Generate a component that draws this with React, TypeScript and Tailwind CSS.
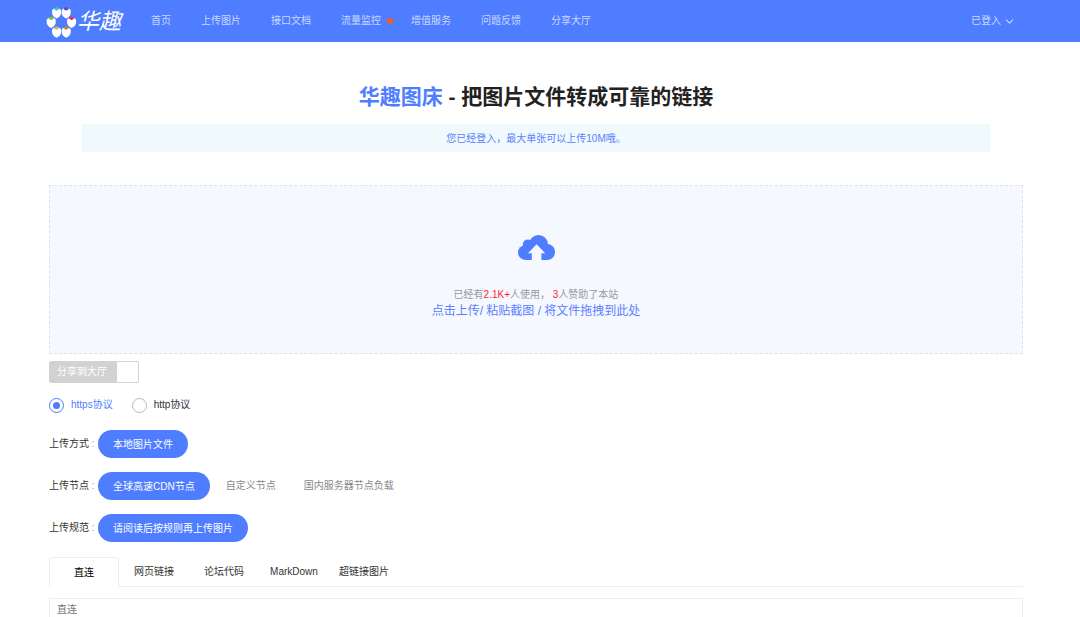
import { useState } from 'react';
import { ChevronDown } from 'lucide-react';

const NAV = [
  { label: '首页' },
  { label: '上传图片' },
  { label: '接口文档' },
  { label: '流量监控', dot: true },
  { label: '增值服务' },
  { label: '问题反馈' },
  { label: '分享大厅' },
];

const PETALS = [
  { x: 10.6, y: 7, cap: '#3fc9a8' },
  { x: 20.2, y: 7, cap: '#6a3fc8' },
  { x: 5.2, y: 16.5, cap: '#7ac832' },
  { x: 25.6, y: 16.5, cap: '#e0304a' },
  { x: 10.6, y: 26.2, cap: '#d8bc3a' },
  { x: 20.2, y: 26.2, cap: '#e07a2a' },
];

const TABS = ['直连', '网页链接', '论坛代码', 'MarkDown', '超链接图片'];

function Logo() {
  return (
    <a href="#" className="flex w-[105px] shrink-0 items-center pt-[2px] text-white">
      <svg viewBox="0 0 31 32" className="h-8 w-[31px]" aria-hidden="true">
        {PETALS.map(({ x, y, cap }) => (
          <g key={cap} transform={`translate(${x} ${y})`}>
            <path d="M-4.6 -1.5C-4.6 -4 -2.5 -4.8 0 -4.6C2.5 -4.8 4.6 -4 4.6 -1.5C4.8 2 3.2 4 0 5.5C-3.2 4 -4.8 2 -4.6 -1.5Z" fill="#fff" />
            <path d="M-2.6 -4.4L0 -6L2.6 -4.4C2.2 -3 1.2 -2.6 0 -2.6C-1.2 -2.6 -2.2 -3 -2.6 -4.4Z" fill={cap} />
          </g>
        ))}
      </svg>
      <span className="text-[22px] leading-none italic">华趣</span>
    </a>
  );
}

function CloudUpload() {
  return (
    <svg viewBox="0 0 37 25" className="h-[25px] w-[37px]" aria-hidden="true">
      <g fill="#4f7dff">
        <circle cx="20.5" cy="9.5" r="9.5" />
        <circle cx="9.8" cy="9.6" r="5" />
        <circle cx="7.4" cy="17.6" r="7.4" />
        <circle cx="29" cy="17" r="8" />
        <path d="M7.4 10H29V25H7.4Z" />
      </g>
      <path d="M18.6 9.2L27.2 18.2H23.4V25H13.8V18.2H10Z" fill="#f5f8ff" />
    </svg>
  );
}

function OptionRow({ label, action, children }: { label: string; action: string; children?: React.ReactNode }) {
  return (
    <div className="flex h-7 items-center">
      <span className="w-[49px] whitespace-nowrap">
        {label} <span className="text-gray-400">:</span>
      </span>
      <button type="button" className="h-7 rounded-full bg-[#4f7dff] px-[15px] pt-px text-white">
        {action}
      </button>
      {children}
    </div>
  );
}

export default function App() {
  const [share, setShare] = useState(false);
  const [protocol, setProtocol] = useState('https');
  const [tab, setTab] = useState(TABS[0]);

  return (
    <div className="h-screen overflow-hidden bg-white font-['Liberation_Sans','Noto_Sans_CJK_SC',sans-serif] text-[10px] leading-4 text-[#333]">
      <header className="flex h-[42px] items-center bg-[#4f7dff] pr-[64px] pl-[46px] text-[#cad8ff]">
        <Logo />
        <nav className="flex gap-[30px]">
          {NAV.map(({ label, dot }) => (
            <a key={label} href="#" className="relative whitespace-nowrap">
              {label}
              {dot && <span className="absolute top-[5px] -right-3 h-[6px] w-[6px] rounded-full bg-[#ff5722]" />}
            </a>
          ))}
        </nav>
        <button type="button" className="ml-auto flex items-center gap-[2px]">
          已登入
          <ChevronDown size={13} strokeWidth={2} />
        </button>
      </header>

      <main className="pr-[57px] pl-[49px]">
        <h1 className="mt-10 text-center text-[21px] leading-[30px] font-bold text-[#222]">
          <span className="text-[#4f7dff]">华趣图床</span> - 把图片文件转成可靠的链接
        </h1>
        <p className="mx-[33px] mt-3 bg-[#f0fafd] pt-[7px] pb-[5px] text-center text-[#5b80ff]">
          您已经登入，最大单张可以上传10M哦。
        </p>

        <button
          type="button"
          className="mt-[33px] flex h-[169px] w-full flex-col items-center border border-dashed border-[#dfe3ec] bg-[#f5f8ff] pt-[49px]"
        >
          <CloudUpload />
          <span className="mt-[27px] text-[#999]">
            已经有<span className="text-[#ff1f2f]">2.1K+</span>人使用， <span className="text-[#ff1f2f]">3</span>人赞助了本站
          </span>
          <span className="text-xs text-[#5b80ff]">点击上传/ 粘贴截图 / 将文件拖拽到此处</span>
        </button>

        {/* Share switch */}
        <label className="mt-[7px] flex h-[22px] w-[90px] cursor-pointer items-stretch rounded-xs border border-[#d2d2d2] bg-white">
          <input type="checkbox" className="sr-only" checked={share} onChange={e => setShare(e.target.checked)} />
          <span
            className={`flex w-[67px] items-center px-[7px] text-white ${share ? 'ml-auto bg-[#4f7dff]' : 'bg-[#d2d2d2]'}`}
          >
            分享到大厅
          </span>
        </label>

        <div className="mt-[14px] flex h-4 items-center gap-[19px]">
          {['https', 'http'].map(p => (
            <label
              key={p}
              className={`flex cursor-pointer items-center gap-[7px] ${protocol === p ? 'text-[#4f7dff]' : 'text-[#333]'}`}
            >
              <input
                type="radio"
                name="protocol"
                value={p}
                checked={protocol === p}
                onChange={() => setProtocol(p)}
                className="h-[15px] w-[15px] appearance-none rounded-full border border-[#b8b8b8] bg-white checked:border-[#4f7dff] checked:bg-[#4f7dff] checked:bg-clip-content checked:p-[3px]"
              />
              {p}协议
            </label>
          ))}
        </div>

        <div className="mt-[17px] flex flex-col gap-[14px]">
          <OptionRow label="上传方式" action="本地图片文件" />
          <OptionRow label="上传节点" action="全球高速CDN节点">
            <a href="#" className="ml-4 text-[#888]">自定义节点</a>
            <a href="#" className="ml-7 text-[#888]">国内服务器节点负载</a>
          </OptionRow>
          <OptionRow label="上传规范" action="请阅读后按规则再上传图片" />
        </div>

        <div role="tablist" className="mt-[15px] flex h-[30px] border-b border-[#eee]">
          {TABS.map(t => (
            <button
              key={t}
              type="button"
              role="tab"
              aria-selected={tab === t}
              onClick={() => setTab(t)}
              className={`h-[30px] w-[70px] whitespace-nowrap ${
                tab === t ? 'rounded-t-xs border border-b-0 border-[#eee] bg-white text-black' : 'text-[#333]'
              }`}
            >
              {t}
            </button>
          ))}
        </div>
        <textarea
          aria-label={tab}
          placeholder={tab}
          className="mt-[11px] block h-[74px] w-full resize-none border border-[#eee] bg-white px-[7px] py-[3px] placeholder:text-[#777]"
        />
      </main>
    </div>
  );
}
